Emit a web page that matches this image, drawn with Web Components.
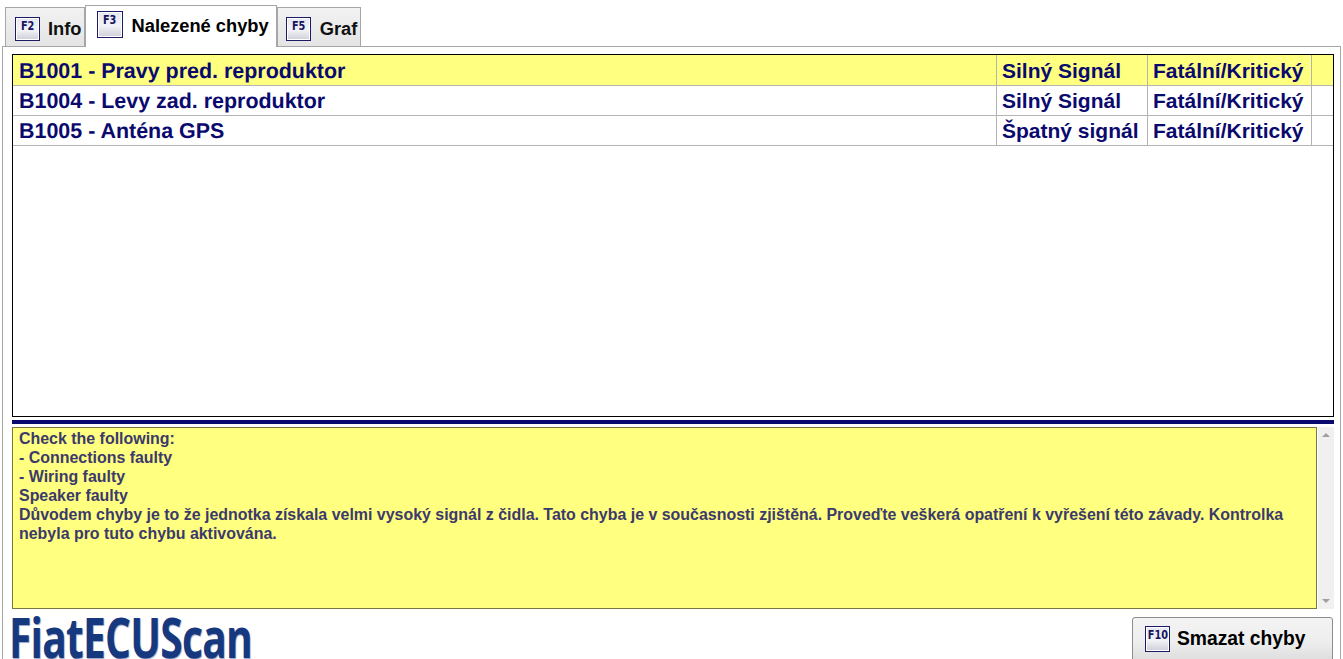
<!DOCTYPE html>
<html>
<head>
<meta charset="utf-8">
<title>FiatECUScan</title>
<style>
    html, body {
        margin: 0;
        height: 659px;
        overflow: hidden;
        background: #fff;
        font-family: "Liberation Sans", Arial, sans-serif;
    }
</style>
</head>
<body>
<ecu-app></ecu-app>

<script>
class EcuKey extends HTMLElement {
    connectedCallback() {
        this.attachShadow({ mode: 'open' });
        this.shadowRoot.innerHTML = `
            <style>
                :host {
                    display: flex;
                    width: 25px;
                    height: 24px;
                    flex: none;
                    align-items: flex-start;
                    justify-content: center;
                    box-sizing: border-box;
                    border: 1px solid #1c1c66;
                    background: linear-gradient(#e6e7f0, #f2f2f7 55%, #cdced8);
                    box-shadow: inset 0 0 0 1px #fff;
                    color: #14145e;
                    font: bold 12.5px "DejaVu Sans", sans-serif;
                    line-height: 15px;
                }
                span {
                    display: block;
                    white-space: nowrap;
                    transform: scaleX(.78);
                }
            </style>
            <span><slot></slot></span>
        `;
    }
}

class EcuTab extends HTMLElement {
    connectedCallback() {
        this.attachShadow({ mode: 'open' });
        this.shadowRoot.innerHTML = `
            <style>
                :host {
                    display: flex;
                    box-sizing: border-box;
                    align-items: center;
                    height: 39px;
                    margin-top: 2px;
                    gap: 8px;
                    padding: 3px 2px 0 9px;
                    border: 1px solid #a6a6a6;
                    border-bottom: none;
                    background: linear-gradient(#f2f2f2, #e4e4e4);
                    color: #111;
                    font-size: 18.3px;
                    font-weight: bold;
                }
                :host([active]) {
                    height: 42px;
                    margin-top: 0;
                    margin-bottom: -1px;
                    position: relative;
                    z-index: 1;
                    gap: 9px;
                    padding: 0 7px 2px 11px;
                    background: #fff;
                    color: #000;
                }
                :host([active]) ecu-key {
                    width: 26px;
                    height: 27px;
                    margin-bottom: 2px;
                }
                :host([last]) {
                    gap: 9px;
                    padding: 3px 3px 0 8px;
                }
            </style>
            <ecu-key>${this.getAttribute('key')}</ecu-key>
            <slot></slot>
        `;
    }
}

class EcuFaultRow extends HTMLElement {
    connectedCallback() {
        this.attachShadow({ mode: 'open' });
        this.shadowRoot.innerHTML = `
            <style>
                :host {
                    display: grid;
                    grid-template-columns: 984px 151px 164px 21px;
                    height: 30px;
                    box-sizing: border-box;
                    border-bottom: 1px solid #b4b4b4;
                    color: #0a0a6e;
                    font-size: 21px;
                    font-weight: bold;
                    line-height: 29px;
                    white-space: nowrap;
                }
                :host([selected]) {
                    height: 31px;
                    background: #ffff80;
                    line-height: 32px;
                }
                div {
                    border-right: 1px solid #b4b4b4;
                    padding-left: 5px;
                    overflow: hidden;
                }
                .code {
                    padding-left: 7px;
                    font-size: 21.45px;
                    line-height: 31px;
                    text-rendering: geometricPrecision;
                }
                :host([selected]) .code {
                    line-height: 32px;
                }
                div:nth-child(2) {
                    padding-left: 6px;
                }
                div:last-child {
                    border-right: none;
                }
            </style>
            <div class="code">${this.getAttribute('code')}</div>
            <div>${this.getAttribute('signal')}</div>
            <div>${this.getAttribute('level')}</div>
            <div></div>
        `;
    }
}

class EcuNotes extends HTMLElement {
    connectedCallback() {
        this.attachShadow({ mode: 'open' });
        this.shadowRoot.innerHTML = `
            <style>
                :host {
                    display: flex;
                    height: 182px;
                    flex: none;
                }
                .text {
                    flex: 1;
                    box-sizing: border-box;
                    border: 1px solid #77773f;
                    background: #ffff80;
                    padding: 1px 20px 0 6px;
                    color: #3c3a6a;
                    font-size: 15.95px;
                    font-weight: bold;
                    line-height: 19px;
                }
                .bar {
                    width: 16px;
                    margin-left: 1px;
                    background: #f0f0f0;
                    display: flex;
                    flex-direction: column;
                    justify-content: space-between;
                    align-items: center;
                    padding: 6px 0;
                    box-sizing: border-box;
                }
                .bar i {
                    width: 0;
                    height: 0;
                    border-left: 4px solid transparent;
                    border-right: 4px solid transparent;
                }
                .up { border-bottom: 4px solid #a0a0a0; }
                .down { border-top: 4px solid #a0a0a0; }
            </style>
            <div class="text"><slot></slot></div>
            <div class="bar"><i class="up"></i><i class="down"></i></div>
        `;
    }
}

class EcuButton extends HTMLElement {
    connectedCallback() {
        this.attachShadow({ mode: 'open' });
        this.shadowRoot.innerHTML = `
            <style>
                :host {
                    display: flex;
                    align-items: center;
                    box-sizing: border-box;
                    width: 201px;
                    height: 50px;
                    padding: 0 0 6px 12px;
                    gap: 7px;
                    border: 1px solid #8c8c8c;
                    border-radius: 3px;
                    background: linear-gradient(#f3f3f3, #eeeeee 50%, #d8d8d8);
                    color: #000;
                    font-size: 19.3px;
                    font-weight: bold;
                }
                ecu-key {
                    height: 26px;
                }
            </style>
            <ecu-key>${this.getAttribute('key')}</ecu-key>
            <slot></slot>
        `;
    }
}

class EcuApp extends HTMLElement {
    connectedCallback() {
        this.attachShadow({ mode: 'open' });
        this.shadowRoot.innerHTML = `
            <style>
                :host {
                    display: block;
                    height: 659px;
                    overflow: hidden;
                    padding-top: 5px;
                    box-sizing: border-box;
                }
                .tabs {
                    display: flex;
                    padding-left: 5px;
                    height: 41px;
                }
                .panel {
                    margin: 0 2px 0 2px;
                    height: 640px;
                    box-sizing: border-box;
                    border: 1px solid #a6a6a6;
                    padding: 7px 6px 0 9px;
                    display: flex;
                    flex-direction: column;
                }
                .faults {
                    height: 363px;
                    flex: none;
                    box-sizing: border-box;
                    border: 1px solid #000;
                }
                .split {
                    height: 4px;
                    flex: none;
                    margin: 3px 0;
                    background: #0a0a6e;
                }
                .foot {
                    display: flex;
                    justify-content: space-between;
                    align-items: flex-start;
                    padding-top: 8px;
                }
                .logo {
                    display: block;
                    color: #16387f;
                    font: 700 55px/40px "Open Sans", sans-serif;
                    letter-spacing: -1px;
                    transform: scaleX(.74);
                    transform-origin: left top;
                    white-space: nowrap;
                    margin-left: -3px;
                    width: 300px;
                    text-shadow: 1px 1px 1px #9aa6c4;
                }
                ecu-button {
                    margin-right: 1px;
                }
            </style>
            <div class="tabs">
                <ecu-tab key="F2">Info</ecu-tab>
                <ecu-tab key="F3" active>Nalezené chyby</ecu-tab>
                <ecu-tab key="F5" last>Graf</ecu-tab>
            </div>
            <div class="panel">
                <div class="faults">
                    <ecu-fault-row selected code="B1001 - Pravy pred. reproduktor" signal="Silný Signál" level="Fatální/Kritický"></ecu-fault-row>
                    <ecu-fault-row code="B1004 - Levy zad. reproduktor" signal="Silný Signál" level="Fatální/Kritický"></ecu-fault-row>
                    <ecu-fault-row code="B1005 - Anténa GPS" signal="Špatný signál" level="Fatální/Kritický"></ecu-fault-row>
                </div>
                <div class="split"></div>
                <ecu-notes>Check the following:<br>- Connections faulty<br>- Wiring faulty<br>Speaker faulty<br>Důvodem chyby je to že jednotka získala velmi vysoký signál z čidla. Tato chyba je v současnosti zjištěná. Proveďte veškerá opatření k vyřešení této závady. Kontrolka nebyla pro tuto chybu aktivována.</ecu-notes>
                <div class="foot">
                    <span class="logo">FiatECUScan</span>
                    <ecu-button key="F10">Smazat chyby</ecu-button>
                </div>
            </div>
        `;
    }
}

customElements.define('ecu-key', EcuKey);
customElements.define('ecu-tab', EcuTab);
customElements.define('ecu-fault-row', EcuFaultRow);
customElements.define('ecu-notes', EcuNotes);
customElements.define('ecu-button', EcuButton);
customElements.define('ecu-app', EcuApp);
</script>
</body>
</html>
